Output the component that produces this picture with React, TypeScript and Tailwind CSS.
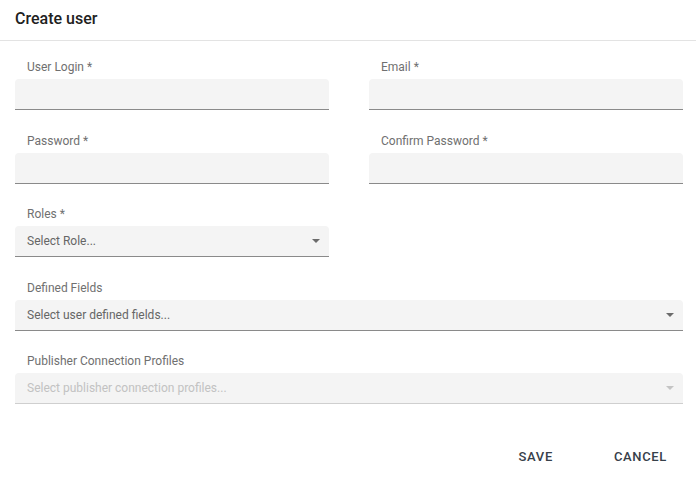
const font = { fontFamily: "Roboto, 'Liberation Sans', sans-serif" };

type FieldProps = {
  label: string;
  placeholder?: string;
  select?: boolean;
  disabled?: boolean;
};

const Caret = ({ disabled }: { disabled?: boolean }) => (
  <svg
    width="8"
    height="4"
    viewBox="0 0 8 4"
    className={disabled ? "fill-[#c4c4c4]" : "fill-[#6b6b6b]"}
  >
    <path d="M0 0 L8 0 L4 4 Z" />
  </svg>
);

const Field = ({ label, placeholder, select, disabled }: FieldProps) => (
  <div className="flex flex-col">
    <label className="mb-[5px] pl-3 text-[12px] leading-[14px] text-[#707070]">
      {label}
    </label>
    <div
      className={`flex h-[31px] items-center justify-between rounded-t-[4px] border-b bg-[#f4f4f4] pl-3 pr-[9px] ${
        disabled ? "border-[#cfcfcf]" : "border-[#8a8a8a]"
      }`}
    >
      {placeholder && (
        <span
          className={`text-[12px] ${
            disabled ? "text-[#c2c2c2]" : "text-[#666666]"
          }`}
        >
          {placeholder}
        </span>
      )}
      {select && <Caret disabled={disabled} />}
    </div>
  </div>
);

export default function App() {
  return (
    <div className="h-[477px] w-[696px] bg-white" style={font}>
      <div className="flex h-[41px] items-center border-b border-[#e3e3e3] px-[15px] pb-[2px]">
        <h1 className="text-[16px] font-medium text-[#212121]">Create user</h1>
      </div>

      <div className="flex flex-col gap-[23.5px] pl-[15px] pr-[13px] pt-[19px]">
        <div className="grid grid-cols-2 gap-x-[40px]">
          <Field label="User Login *" />
          <Field label="Email *" />
        </div>
        <div className="grid grid-cols-2 gap-x-[40px]">
          <Field label="Password *" />
          <Field label="Confirm Password *" />
        </div>
        <div className="grid grid-cols-2 gap-x-[40px]">
          <Field label="Roles *" placeholder="Select Role..." select />
        </div>
        <Field
          label="Defined Fields"
          placeholder="Select user defined fields..."
          select
        />
        <Field
          label="Publisher Connection Profiles"
          placeholder="Select publisher connection profiles..."
          select
          disabled
        />
      </div>

      <div className="mt-[35px] flex justify-end gap-[29px] pr-[13px]">
        <button className="h-9 px-4 text-[13px] font-medium uppercase tracking-[0.05em] text-[#37404a]">
          Save
        </button>
        <button className="h-9 px-4 text-[13px] font-medium uppercase tracking-[0.05em] text-[#37404a]">
          Cancel
        </button>
      </div>
    </div>
  );
}
